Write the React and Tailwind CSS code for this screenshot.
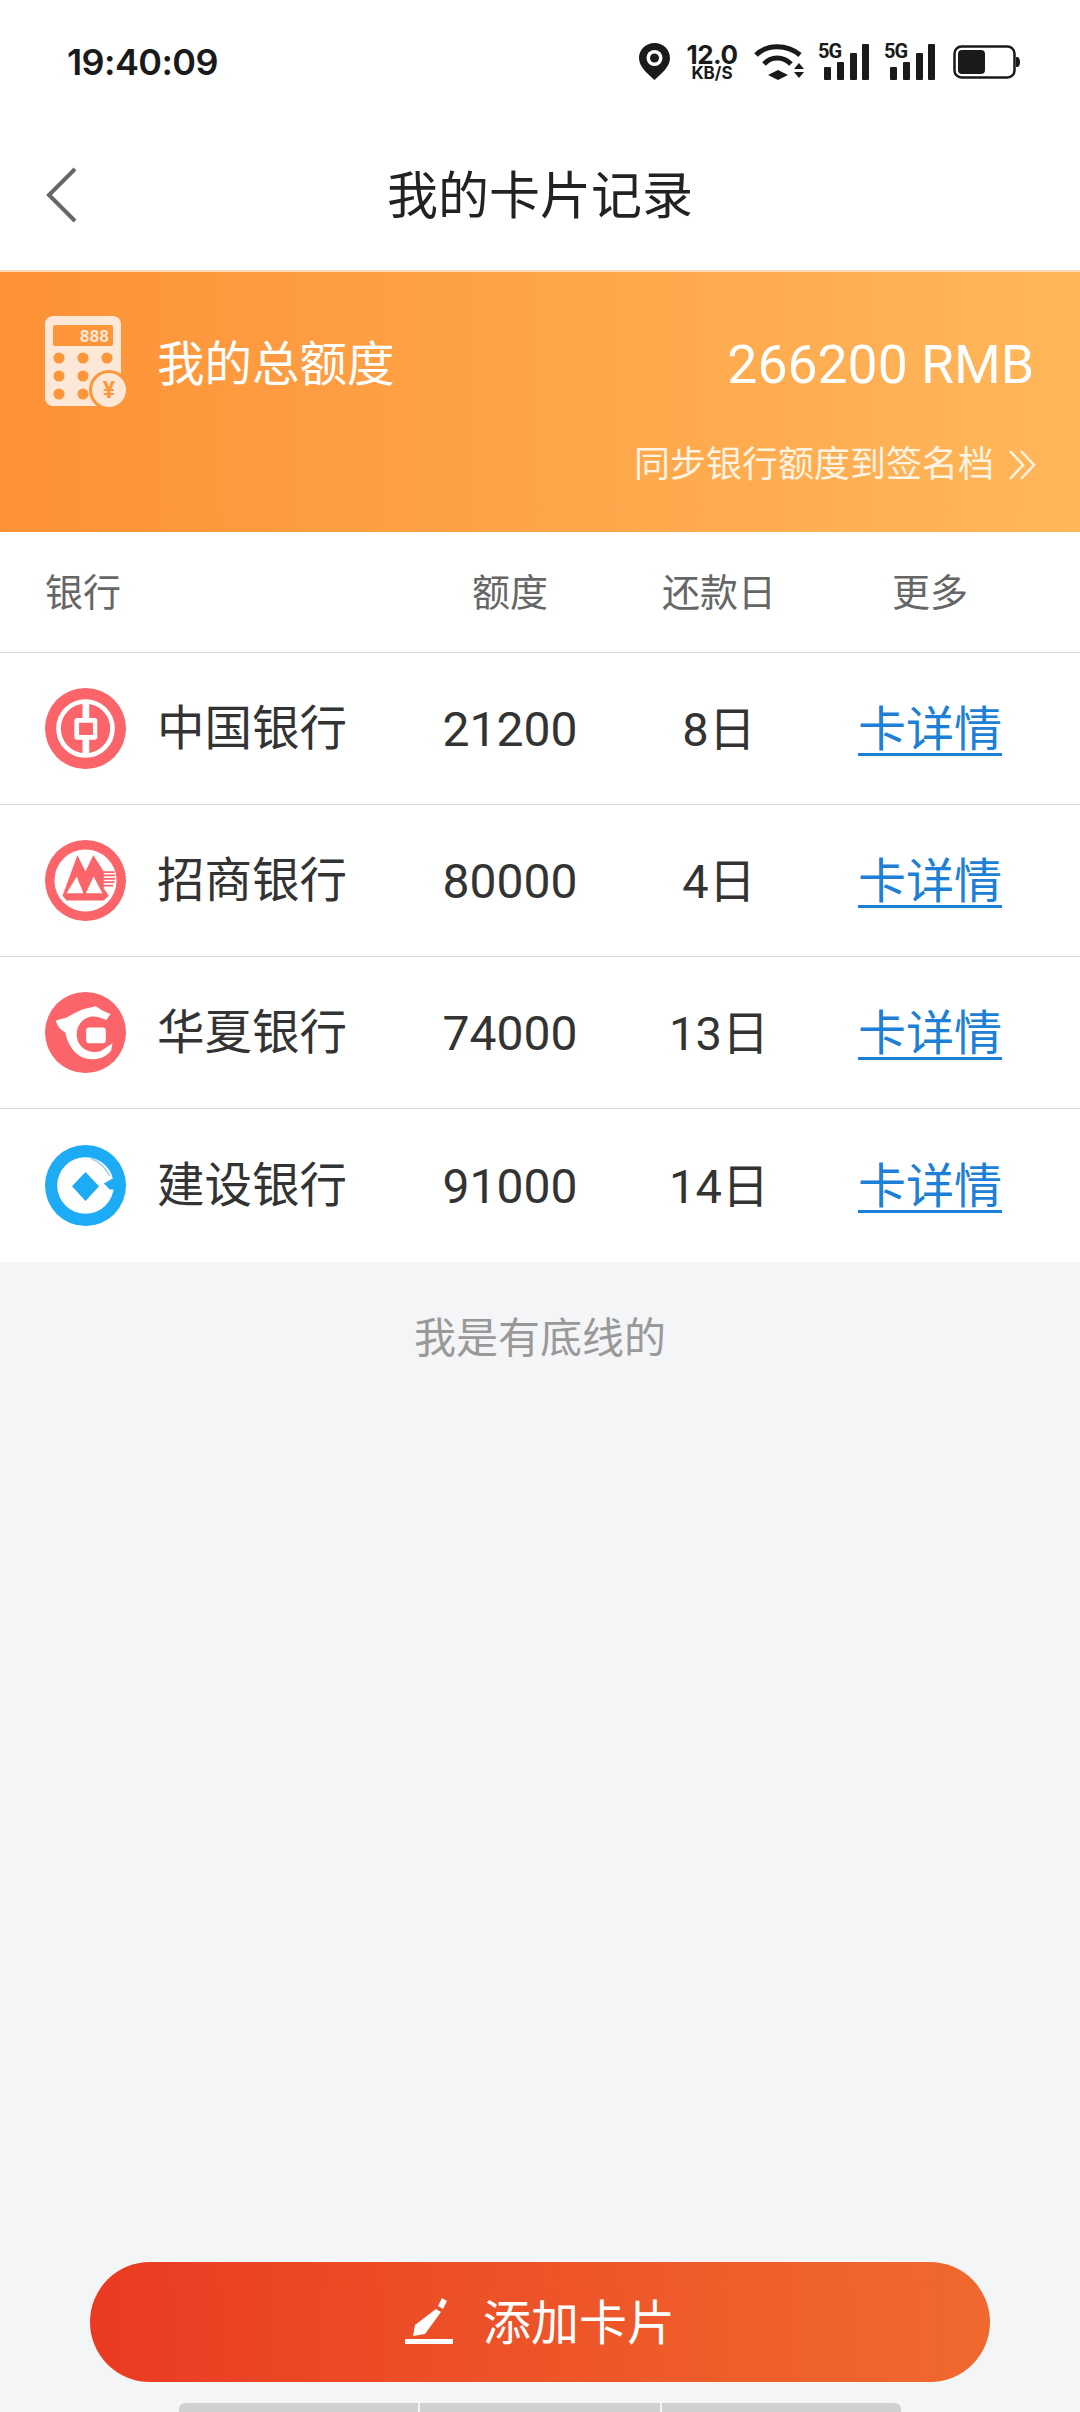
import React from "react";

const rowCols = "grid grid-cols-[400px_220px_196px_264px] items-center";

function BocLogo() {
  return (
    <svg viewBox="76 55 240 240" className="w-[81px] h-[81px] mb-[4px]">
      <circle cx="196" cy="175" r="120" fill="#fb6468" />
      <circle cx="196" cy="175" r="80" fill="none" stroke="#fff" strokeWidth="14" />
      <rect x="187" y="95" width="20" height="160" fill="#fff" />
      <rect x="163" y="144" width="68" height="64" rx="8" fill="#fff" />
      <rect x="177" y="158" width="41" height="36" fill="#fb6468" />
    </svg>
  );
}

function CmbLogo() {
  return (
    <svg viewBox="76 47 240 240" className="w-[81px] h-[81px] mb-[4px]">
      <circle cx="196" cy="167" r="120" fill="#fb6468" />
      <circle cx="196" cy="167" r="92" fill="#fff" />
      <path d="M172 92 L196 140 L219 92 L250 140 L250 190 L265 212 L250 226 L140 226 L128 212Z" fill="#fb6468" />
      <path d="M170 155 L140 205 L190 205Z M220 155 L197 205 L246 205Z" fill="#fff" />
      <path d="M245 142 H282 M245 152 H284 M245 162 H284 M245 172 H282 M245 182 H278" stroke="#fb6468" strokeWidth="5" />
    </svg>
  );
}

function HxbLogo() {
  return (
    <svg viewBox="76 53 240 240" className="w-[81px] h-[81px] mb-[4px]">
      <circle cx="196" cy="173" r="120" fill="#fb6468" />
      <path
        d="M108 138 L126 132 C150 130 172 104 208 100 L226 95 L246 108 L270 118 L258 136 L236 128 C196 118 170 146 170 180 C170 216 206 240 242 228 L276 205 L272 226 C250 256 200 262 170 236 C148 216 140 192 136 172 C124 166 114 158 108 138Z"
        fill="#fff"
      />
      <rect x="198" y="158" width="58" height="47" rx="8" fill="#fff" />
    </svg>
  );
}

function CcbLogo() {
  return (
    <svg viewBox="76 58 240 240" className="w-[81px] h-[81px] mb-[4px]">
      <circle cx="196" cy="178" r="120" fill="#1eabf5" />
      <circle cx="196" cy="178" r="84" fill="#fff" />
      <path d="M196 138 L236 180 L196 224 L156 180Z" fill="#1eabf5" />
      <path d="M212 98 C236 106 256 128 268 150" fill="none" stroke="#8fd3f8" strokeWidth="4" />
      <path d="M250 172 L290 150 L300 190 L268 190Z" fill="#1eabf5" />
    </svg>
  );
}

function CalcIcon() {
  return (
    <svg viewBox="0 0 82 92" className="w-[82px] h-[92px]">
      <rect x="0" y="0" width="76" height="90" rx="8" fill="#fde8d7" />
      <rect x="8" y="9" width="60" height="21" rx="2" fill="#fd9539" />
      <text x="64" y="26" textAnchor="end" fontSize="17" fontWeight="700" fill="#fde8d7" fontFamily="Roboto, sans-serif">888</text>
      {[14, 38, 62].map((cx) =>
        [42, 60, 78].map((cy) => <circle key={cx + "-" + cy} cx={cx} cy={cy} r="5.5" fill="#fd9539" />)
      )}
      <circle cx="64" cy="74" r="20" fill="#fd9539" />
      <circle cx="64" cy="74" r="17" fill="#fde8d7" />
      <text x="64" y="82" textAnchor="middle" fontSize="23" fontWeight="700" fill="#fd9539" fontFamily="Roboto, sans-serif">¥</text>
    </svg>
  );
}

function Signal() {
  return (
    <div className="relative w-[52px] h-[36px]">
      <span className="absolute left-0 top-[-3px] text-[20px] leading-[20px] font-bold text-[#1a1a1a] tracking-[-1px] font-['Roboto',sans-serif]">5G</span>
      <svg viewBox="0 0 52 36" className="w-[52px] h-[36px]">
        <rect x="6" y="23" width="7" height="13" rx="1" fill="#1a1a1a" />
        <rect x="19" y="18" width="7" height="18" rx="1" fill="#1a1a1a" />
        <rect x="32" y="9" width="7" height="27" rx="1" fill="#1a1a1a" />
        <rect x="44" y="0" width="7" height="36" rx="1" fill="#1a1a1a" />
      </svg>
    </div>
  );
}

function StatusBar() {
  return (
    <div className="h-[110px] flex items-center justify-between pl-[67px] pr-[60px] pt-[13px] bg-white">
      <span className="text-[36px] font-semibold text-[#1a1a1a] font-['Inter',sans-serif] tracking-[-0.6px]">19:40:09</span>
      <div className="flex items-center">
        <svg viewBox="0 0 31 37" className="w-[31px] h-[37px]">
          <path d="M15.5 0 C7 0 0 6.5 0 15 C0 24 9 31 15.5 37 C22 31 31 24 31 15 C31 6.5 24 0 15.5 0Z" fill="#1a1a1a" />
          <circle cx="15.5" cy="15" r="8" fill="#fff" />
          <circle cx="15.5" cy="15" r="4.5" fill="#1a1a1a" />
        </svg>
        <div className="ml-[16px] w-[52px] flex flex-col items-center text-[#1a1a1a] font-bold font-['Inter',sans-serif]">
          <span className="text-[26px] leading-[23px] tracking-[-0.5px]">12.0</span>
          <span className="text-[17px] leading-[14px]">KB/S</span>
        </div>
        <svg viewBox="0 0 50 36" className="ml-[16px] w-[50px] h-[36px]">
          <path d="M2 11 C13 0 33 0 46 11" fill="none" stroke="#1a1a1a" strokeWidth="5" />
          <path d="M10 20 C17 12 29 12 37 20" fill="none" stroke="#1a1a1a" strokeWidth="5" />
          <path d="M24 26 L34 31 L24 36 L14 31Z" fill="#1a1a1a" />
          <path d="M45 19 L50 25 H40Z M40 28 H50 L45 34Z" fill="#1a1a1a" />
        </svg>
        <div className="ml-[14px]"><Signal /></div>
        <div className="ml-[14px]"><Signal /></div>
        <svg viewBox="0 0 67 34" className="ml-[17px] w-[67px] h-[34px]">
          <rect x="1.5" y="1.5" width="60" height="31" rx="7" fill="none" stroke="#1a1a1a" strokeWidth="2.5" />
          <rect x="5" y="5" width="27" height="24" rx="4" fill="#1a1a1a" />
          <path d="M63 12 H64 C66 12 67 14 67 17 C67 20 66 22 64 22 H63Z" fill="#1a1a1a" />
        </svg>
      </div>
    </div>
  );
}

const banks = [
  { name: "中国银行", limit: "21200", day: "8日", logo: <BocLogo /> },
  { name: "招商银行", limit: "80000", day: "4日", logo: <CmbLogo /> },
  { name: "华夏银行", limit: "74000", day: "13日", logo: <HxbLogo /> },
  { name: "建设银行", limit: "91000", day: "14日", logo: <CcbLogo /> },
];

export default function App() {
  return (
    <div className="w-[1080px] h-[2412px] flex flex-col overflow-hidden bg-[#f4f5f7] font-['Roboto','Noto_Sans_CJK_SC',sans-serif]">
      <StatusBar />

      <div className="relative h-[160px] flex items-center justify-center bg-white">
        <svg viewBox="0 0 32 56" className="absolute left-[46px] top-[57px] w-[32px] h-[56px]">
          <path d="M29 2 L3 28 L29 54" fill="none" stroke="#666" strokeWidth="4" />
        </svg>
        <h1 className="text-[51px] leading-[60px] text-[#222] font-normal pt-[14px]">我的卡片记录</h1>
      </div>

      <div className="h-[262px] bg-gradient-to-r from-[#fd9136] to-[#ffb75a] border-t-[2px] border-[#fbd9b4] pl-[45px] pr-[44px] pt-[44px] flex flex-col">
        <div className="flex items-start">
          <CalcIcon />
          <span className="ml-[30px] mt-[18px] text-[47.5px] leading-[62px] text-white">我的总额度</span>
          <span className="ml-auto mr-[2px] mt-[18px] text-[53.5px] leading-[62px] text-white">266200 RMB</span>
        </div>
        <div className="flex items-center justify-end mt-[31px]">
          <span className="text-[36px] leading-[52px] text-[#fff3e2]">同步银行额度到签名档</span>
          <svg viewBox="0 0 28 32" className="ml-[14px] w-[28px] h-[32px]">
            <path d="M2 2 L15 16 L2 30 M13 2 L26 16 L13 30" fill="none" stroke="#fff3e2" strokeWidth="2.5" />
          </svg>
        </div>
      </div>

      <div className="bg-white">
        <div className={rowCols + " h-[121px] border-b border-[#d9d9d9] text-[38px] text-[#666] pt-[2px]"}>
          <span className="pl-[45px]">银行</span>
          <span className="text-center">额度</span>
          <span className="text-center pl-[2px]">还款日</span>
          <span className="text-center pr-[36px]">更多</span>
        </div>
        {banks.map((bank, i) => (
          <div
            key={bank.name}
            className={rowCols + " pt-[3px] " + (i < banks.length - 1 ? "h-[152px] border-b border-[#d9d9d9]" : "h-[153px]")}
          >
            <div className="flex items-center pl-[45px]">
              {bank.logo}
              <span className="ml-[31px] text-[47.5px] text-[#333]">{bank.name}</span>
            </div>
            <span className="text-center text-[48px] text-[#333]">{bank.limit}</span>
            <span className="text-center pl-[2px] text-[47px] text-[#333]">{bank.day}</span>
            <span className="text-center pr-[36px] text-[48px] text-[#1d7fd6] underline underline-offset-[7px] decoration-[3px]">卡详情</span>
          </div>
        ))}
      </div>

      <p className="mt-[50px] text-center text-[42px] leading-[54px] text-[#999]">我是有底线的</p>

      <div className="mt-auto mx-[90px] h-[120px] rounded-full bg-gradient-to-r from-[#ea3a22] to-[#f0692e] flex items-center justify-center">
        <svg viewBox="0 0 48 48" className="w-[48px] h-[48px]">
          <path d="M37 0 L42 3 L38 11 L33 8Z M31 11 L36 14 L20 36 L8 38 L10 27Z" fill="#fff" />
          <rect x="0" y="41" width="48" height="5" fill="#fff" />
        </svg>
        <span className="ml-[30px] pt-[4px] text-[48px] text-white">添加卡片</span>
      </div>

      <div className="mt-[21px] mx-auto w-[722px] h-[9px] flex gap-[2px]">
        <div className="flex-1 bg-[#cfd1d1] rounded-tl-[6px]" />
        <div className="flex-1 bg-[#cfd1d1]" />
        <div className="flex-1 bg-[#cfd1d1] rounded-tr-[6px]" />
      </div>
    </div>
  );
}
